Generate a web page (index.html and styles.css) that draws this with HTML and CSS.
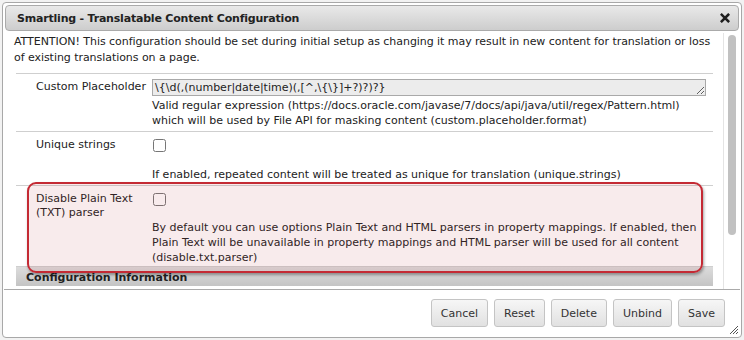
FILE: index.html
```html
<!DOCTYPE html>
<html>
<head>
<meta charset="utf-8">
<link rel="stylesheet" href="styles.css">
</head>
<body>
<div class="dialog">
  <div class="titlebar">
    <span class="title">Smartling - Translatable Content Configuration</span>
    <svg class="close" width="10" height="10" viewBox="0 0 10 10"><path d="M1.8 1.8 L8.2 8.2 M8.2 1.8 L1.8 8.2" stroke="#1e1e1e" stroke-width="2.6" stroke-linecap="square"/></svg>
  </div>
  <div class="body">
    <div class="main">
      <p class="attention">ATTENTION! This configuration should be set during initial setup as changing it may result in new content for translation or loss of existing translations on a page.</p>
      <div class="table">
        <div class="row">
          <div class="label">Custom Placeholder</div>
          <div class="value">
            <textarea class="field" rows="1" readonly>\{\d(,(number|date|time)(,[^,\{\}]+?)?)?}</textarea>
            <div class="help">Valid regular expression (https://docs.oracle.com/javase/7/docs/api/java/util/regex/Pattern.html) which will be used by File API for masking content (custom.placeholder.format)</div>
          </div>
        </div>
        <div class="row">
          <div class="label">Unique strings</div>
          <div class="value">
            <input type="checkbox" class="check">
            <div class="help spaced">If enabled, repeated content will be treated as unique for translation (unique.strings)</div>
          </div>
        </div>
        <div class="row marked">
          <div class="label">Disable Plain Text (TXT) parser</div>
          <div class="value">
            <input type="checkbox" class="check">
            <div class="help spaced">By default you can use options Plain Text and HTML parsers in property mappings. If enabled, then Plain Text will be unavailable in property mappings and HTML parser will be used for all content (disable.txt.parser)</div>
          </div>
          <div class="highlight"></div>
        </div>
        <div class="section">Configuration Information</div>
      </div>
    </div>
    <div class="scrollbar"><div class="thumb"></div></div>
  </div>
  <div class="buttons">
    <button>Cancel</button>
    <button>Reset</button>
    <button>Delete</button>
    <button>Unbind</button>
    <button>Save</button>
  </div>
  <svg class="grip" width="10" height="10" viewBox="0 0 10 10"><path d="M9 1 L1 9 M9 4 L4 9 M9 7 L7 9" stroke="#555" stroke-width="1"/></svg>
</div>
</body>
</html>
```

FILE: styles.css
```css
html, body {
  margin: 0;
  padding: 0;
}
body {
  background: #f2f2f2;
  font-family: "DejaVu Sans", Verdana, sans-serif;
  font-size: 11px;
  color: #222;
  width: 744px;
  height: 340px;
  overflow: hidden;
}
.dialog {
  position: relative;
  box-sizing: border-box;
  margin: 2px;
  width: 740px;
  height: 336px;
  border: 1px solid #a8a8a8;
  border-radius: 4px;
  background: #fff;
  padding: 2px;
  display: flex;
  flex-direction: column;
}
.titlebar {
  box-sizing: border-box;
  height: 26px;
  flex: none;
  border: 1px solid #aaa;
  border-radius: 4px;
  background: linear-gradient(#e9e9e9, #cdcdcd);
  display: flex;
  align-items: center;
  justify-content: space-between;
  padding: 0 8px 0 11px;
}
.title {
  font-weight: bold;
  font-size: 11px;
  letter-spacing: -0.2px;
  color: #222;
}
.close {
  display: block;
}
.body {
  flex: 1;
  display: flex;
  min-height: 0;
  margin-top: 2px;
}
.main {
  flex: 1;
  overflow: hidden;
  padding: 1px 0 0 9px;
  min-width: 0;
}
.attention {
  margin: 0 0 7px 0;
  line-height: 16px;
  letter-spacing: -0.05px;
  width: 708px;
}
.table {
  margin-left: 2px;
  width: 697px;
}
.row {
  position: relative;
  display: flex;
  border-top: 1px solid #cfcfcf;
}
.label {
  box-sizing: border-box;
  width: 136px;
  flex: none;
  padding: 5px 0 0 20px;
  line-height: 15px;
}
.value {
  flex: 1;
  padding: 5px 6px 3px 0;
}
.field {
  display: block;
  box-sizing: border-box;
  width: 554px;
  height: 17px;
  margin: 0 0 2px 0;
  padding: 0 2px;
  border: 1px solid #a9a9a9;
  background: #ececec;
  font-family: "DejaVu Sans", Verdana, sans-serif;
  font-size: 11px;
  line-height: 15px;
  color: #222;
  overflow: hidden;
  resize: vertical;
}
.help {
  line-height: 15px;
}
.help.spaced {
  margin-top: 15px;
}
.check {
  display: block;
  margin: 2px 0 0 1px;
  width: 13px;
  height: 13px;
}
.marked .value {
  padding-bottom: 1px;
}
.marked .label {
  padding-top: 6px;
  line-height: 14px;
}
.marked .check {
  margin-top: 2px;
}
.marked .help.spaced {
  margin-top: 14px;
}
.highlight {
  position: absolute;
  left: 11px;
  right: 10px;
  top: -4px;
  bottom: -7px;
  border: 2px solid #c42a34;
  border-radius: 9px;
  background: rgba(190, 60, 70, 0.1);
  box-shadow: 1px 2px 3px rgba(0, 0, 0, 0.35);
  pointer-events: none;
}
.section {
  border-top: 1px solid #cfcfcf;
  height: 19px;
  line-height: 22px;
  padding-left: 10px;
  font-weight: bold;
  font-size: 11px;
  background: linear-gradient(#dcdcdc, #c4c4c4);
  overflow: hidden;
}
.scrollbar {
  flex: none;
  width: 16px;
  border-left: 1px solid #e4e4e4;
  box-sizing: border-box;
  padding: 2px 0 0 4px;
}
.thumb {
  width: 8px;
  height: 200px;
  border-radius: 4px;
  background: #c1c1c1;
}
.buttons {
  flex: none;
  box-sizing: border-box;
  height: 46px;
  border-top: 1px solid #aaa;
  display: flex;
  justify-content: flex-end;
  align-items: flex-start;
  gap: 6px;
  padding: 9px 15px 0 0;
  margin: 0 -1px 0 -1px;
}
.buttons button {
  box-sizing: border-box;
  height: 28px;
  padding: 0 9px;
  border: 1px solid #c4c4c4;
  border-radius: 3px;
  background: linear-gradient(#f6f6f6, #e1e1e1);
  font-family: "DejaVu Sans", Verdana, sans-serif;
  font-size: 11px;
  color: #333;
}
.grip {
  position: absolute;
  right: 2px;
  bottom: 2px;
}
```
